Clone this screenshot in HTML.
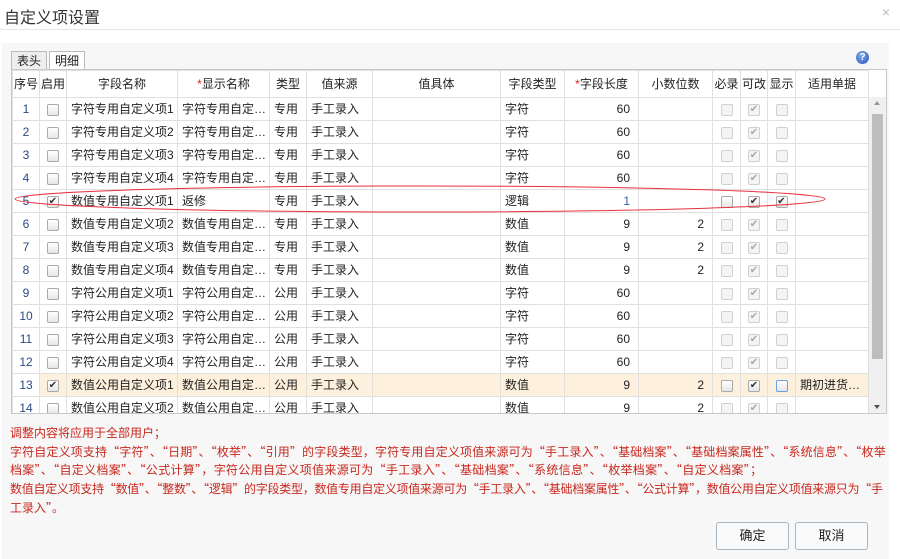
<!DOCTYPE html>
<html><head><meta charset="utf-8"><style>
*{margin:0;padding:0;box-sizing:border-box}
body{width:900px;height:559px;background:#fff;font-family:"Liberation Sans","Noto Sans CJK SC",sans-serif;font-size:12px;color:#222;position:relative;overflow:hidden}
.title{position:absolute;left:4px;top:4px;font-size:16px;color:#333}
.close{position:absolute;right:10px;top:4px;color:#bbb;font-size:14px}
.line{position:absolute;left:0;top:29px;width:900px;height:1px;background:#e6e6e6}
.panel{position:absolute;left:2px;top:43px;width:887px;height:516px;background:#f7f7f7}
.tab{position:absolute;top:51px;height:19px;border:1px solid #bbb;border-bottom:none;background:#eee;padding:2px 5px;line-height:14px;font-size:12px}
.grid{position:absolute;left:11px;top:69px;width:876px;height:345px;border:1px solid #c8c8c8;background:#fff;overflow:hidden}
table{border-collapse:collapse;table-layout:fixed;position:absolute;left:0;top:0;width:873px}
td,th{border:1px solid #e0e0e0;height:23px;white-space:nowrap;overflow:hidden;font-weight:normal;padding:0 4px;line-height:22px}
th{height:27px;text-align:center}
.c{text-align:center;padding:0}.r{text-align:right;padding-right:8px}
.num{color:#2a4a80;text-align:center;padding:0}
.cb{display:inline-block;width:12px;height:12px;border:1px solid #aaa;border-radius:2px;background:linear-gradient(#fff,#e6e6e6);vertical-align:middle;position:relative;font-size:10px;line-height:10px;text-align:center;color:#333}
.cb.d{border-color:#d0d0d0;background:#f4f4f4;color:#aaa}
.hl td{background:#fdf0dc}
.red{color:#e02020}
.sb{position:absolute;left:857px;top:27px;width:17px;height:317px;background:#f0f0f0}
.thumb{position:absolute;left:3px;top:17px;width:11px;height:245px;background:#bdbdbd}
.note{position:absolute;left:10px;top:424px;width:890px;color:#c8281e;font-family:"Noto Sans CJK SC",sans-serif;font-size:12px;line-height:18.7px;white-space:nowrap}
.btn{position:absolute;top:522px;width:73px;height:28px;border:1px solid #a9b4c2;border-radius:3px;background:#fafafa;text-align:center;line-height:26px;font-size:13px}
.help{position:absolute;left:856px;top:51px;width:13px;height:13px;border-radius:50%;background:radial-gradient(circle at 40% 35%,#7fa8e8,#2358b8);color:#fff;font-size:10px;font-weight:bold;text-align:center;line-height:13px}
</style></head><body>
<div class="title">自定义项设置</div><div class="close">×</div>
<div class="line"></div>
<div class="panel"></div>
<div class="tab" style="left:11px;">表头</div>
<div class="tab" style="left:49px;background:#fff;height:20px">明细</div>
<div class="help">?</div>
<div class="grid">
<table>
<colgroup><col style="width:27px"><col style="width:27px"><col style="width:111px"><col style="width:92px"><col style="width:37px"><col style="width:66px"><col style="width:128px"><col style="width:64px"><col style="width:74px"><col style="width:74px"><col style="width:28px"><col style="width:27px"><col style="width:28px"><col style="width:73px"><col style="width:18px"></colgroup>
<tr><th style="padding:0">序号</th><th style="padding:0">启用</th><th>字段名称</th><th><span class="red">*</span>显示名称</th><th style="padding:0">类型</th><th>值来源</th><th>值具体</th><th>字段类型</th><th><span class="red">*</span>字段长度</th><th>小数位数</th><th style="padding:0">必录</th><th style="padding:0">可改</th><th style="padding:0">显示</th><th>适用单据</th><th style="border:none"></th></tr>
<tr><td class="num">1</td><td class="c"><span class="cb"></span></td><td>字符专用自定义项1</td><td>字符专用自定…</td><td>专用</td><td>手工录入</td><td></td><td>字符</td><td class="r">60</td><td></td><td class="c"><span class="cb d"></span></td><td class="c"><span class="cb d">✔</span></td><td class="c"><span class="cb d"></span></td><td></td><td></td></tr>
<tr><td class="num">2</td><td class="c"><span class="cb"></span></td><td>字符专用自定义项2</td><td>字符专用自定…</td><td>专用</td><td>手工录入</td><td></td><td>字符</td><td class="r">60</td><td></td><td class="c"><span class="cb d"></span></td><td class="c"><span class="cb d">✔</span></td><td class="c"><span class="cb d"></span></td><td></td><td></td></tr>
<tr><td class="num">3</td><td class="c"><span class="cb"></span></td><td>字符专用自定义项3</td><td>字符专用自定…</td><td>专用</td><td>手工录入</td><td></td><td>字符</td><td class="r">60</td><td></td><td class="c"><span class="cb d"></span></td><td class="c"><span class="cb d">✔</span></td><td class="c"><span class="cb d"></span></td><td></td><td></td></tr>
<tr><td class="num">4</td><td class="c"><span class="cb"></span></td><td>字符专用自定义项4</td><td>字符专用自定…</td><td>专用</td><td>手工录入</td><td></td><td>字符</td><td class="r">60</td><td></td><td class="c"><span class="cb d"></span></td><td class="c"><span class="cb d">✔</span></td><td class="c"><span class="cb d"></span></td><td></td><td></td></tr>
<tr><td class="num">5</td><td class="c"><span class="cb">✔</span></td><td>数值专用自定义项1</td><td>返修</td><td>专用</td><td>手工录入</td><td></td><td>逻辑</td><td class="r" style="color:#2a5ea8">1</td><td></td><td class="c"><span class="cb"></span></td><td class="c"><span class="cb">✔</span></td><td class="c"><span class="cb">✔</span></td><td></td><td></td></tr>
<tr><td class="num">6</td><td class="c"><span class="cb"></span></td><td>数值专用自定义项2</td><td>数值专用自定…</td><td>专用</td><td>手工录入</td><td></td><td>数值</td><td class="r">9</td><td class="r">2</td><td class="c"><span class="cb d"></span></td><td class="c"><span class="cb d">✔</span></td><td class="c"><span class="cb d"></span></td><td></td><td></td></tr>
<tr><td class="num">7</td><td class="c"><span class="cb"></span></td><td>数值专用自定义项3</td><td>数值专用自定…</td><td>专用</td><td>手工录入</td><td></td><td>数值</td><td class="r">9</td><td class="r">2</td><td class="c"><span class="cb d"></span></td><td class="c"><span class="cb d">✔</span></td><td class="c"><span class="cb d"></span></td><td></td><td></td></tr>
<tr><td class="num">8</td><td class="c"><span class="cb"></span></td><td>数值专用自定义项4</td><td>数值专用自定…</td><td>专用</td><td>手工录入</td><td></td><td>数值</td><td class="r">9</td><td class="r">2</td><td class="c"><span class="cb d"></span></td><td class="c"><span class="cb d">✔</span></td><td class="c"><span class="cb d"></span></td><td></td><td></td></tr>
<tr><td class="num">9</td><td class="c"><span class="cb"></span></td><td>字符公用自定义项1</td><td>字符公用自定…</td><td>公用</td><td>手工录入</td><td></td><td>字符</td><td class="r">60</td><td></td><td class="c"><span class="cb d"></span></td><td class="c"><span class="cb d">✔</span></td><td class="c"><span class="cb d"></span></td><td></td><td></td></tr>
<tr><td class="num">10</td><td class="c"><span class="cb"></span></td><td>字符公用自定义项2</td><td>字符公用自定…</td><td>公用</td><td>手工录入</td><td></td><td>字符</td><td class="r">60</td><td></td><td class="c"><span class="cb d"></span></td><td class="c"><span class="cb d">✔</span></td><td class="c"><span class="cb d"></span></td><td></td><td></td></tr>
<tr><td class="num">11</td><td class="c"><span class="cb"></span></td><td>字符公用自定义项3</td><td>字符公用自定…</td><td>公用</td><td>手工录入</td><td></td><td>字符</td><td class="r">60</td><td></td><td class="c"><span class="cb d"></span></td><td class="c"><span class="cb d">✔</span></td><td class="c"><span class="cb d"></span></td><td></td><td></td></tr>
<tr><td class="num">12</td><td class="c"><span class="cb"></span></td><td>字符公用自定义项4</td><td>字符公用自定…</td><td>公用</td><td>手工录入</td><td></td><td>字符</td><td class="r">60</td><td></td><td class="c"><span class="cb d"></span></td><td class="c"><span class="cb d">✔</span></td><td class="c"><span class="cb d"></span></td><td></td><td></td></tr>
<tr class="hl"><td class="num" style="background:#fff">13</td><td class="c"><span class="cb">✔</span></td><td>数值公用自定义项1</td><td>数值公用自定…</td><td>公用</td><td>手工录入</td><td></td><td>数值</td><td class="r">9</td><td class="r">2</td><td class="c"><span class="cb"></span></td><td class="c"><span class="cb">✔</span></td><td class="c"><span class="cb" style="border-color:#6a9ee8"></span></td><td>期初进货…</td><td style="background:#fff"></td></tr>
<tr><td class="num">14</td><td class="c"><span class="cb"></span></td><td>数值公用自定义项2</td><td>数值公用自定…</td><td>公用</td><td>手工录入</td><td></td><td>数值</td><td class="r">9</td><td class="r">2</td><td class="c"><span class="cb d"></span></td><td class="c"><span class="cb d">✔</span></td><td class="c"><span class="cb d"></span></td><td></td><td></td></tr>
</table>
<div class="sb"><div class="thumb"></div><div style="position:absolute;left:5px;top:4px;width:0;height:0;border:3px solid transparent;border-bottom:4px solid #999;border-top:none"></div><div style="position:absolute;left:5px;bottom:5px;width:0;height:0;border:3px solid transparent;border-top:4px solid #555;border-bottom:none"></div></div>
</div>
<svg style="position:absolute;left:0;top:0" width="900" height="559"><ellipse cx="420" cy="199" rx="405" ry="13" fill="none" stroke="#e83040" stroke-width="1"/></svg>
<div class="note">调整内容将应用于全部用户；<br><span style="letter-spacing:0.15px">字符自定义项支持“字符”、“日期”、“枚举”、“引用”的字段类型，字符专用自定义项值来源可为“手工录入”、“基础档案”、“基础档案属性”、“系统信息”、“枚举</span><br><span style="letter-spacing:0.3px">档案”、“自定义档案”、“公式计算”，字符公用自定义项值来源可为“手工录入”、“基础档案”、“系统信息”、“枚举档案”、“自定义档案”；</span><br><span style="letter-spacing:-0.27px">数值自定义项支持“数值”、“整数”、“逻辑”的字段类型，数值专用自定义项值来源可为“手工录入”、“基础档案属性”、“公式计算”，数值公用自定义项值来源只为“手</span><br>工录入”。</div>
<div class="btn" style="left:716px">确定</div>
<div class="btn" style="left:795px">取消</div>
</body></html>
